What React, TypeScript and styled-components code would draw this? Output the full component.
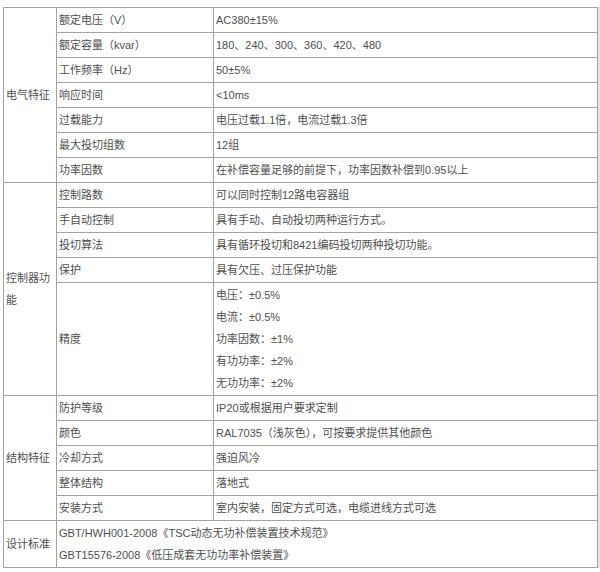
import styled, { createGlobalStyle } from "styled-components";

const GlobalStyle = createGlobalStyle`
  html, body {
    margin: 0;
    background: #ffffff;
  }
  body {
    padding: 7px 0 0 3px;
    font-family: "Liberation Sans", "Noto Sans CJK SC", sans-serif;
    font-size: 11px;
    color: #4f4f4f;
  }
`;

const SpecTable = styled.table`
  width: 594px;
  border-collapse: collapse;
  table-layout: fixed;
  border: 1px solid #9a9a9a;
  box-shadow: 2px 0 0 #e4e4e4;
`;

const Cell = styled.td`
  border: 1px solid #a3a3a3;
  padding: 1px 1px 1px 2px;
  line-height: 22px;
  vertical-align: middle;
  text-align: left;
  word-break: break-all;
  font-size: 11px;
`;

const GroupCell = styled(Cell)`
  padding-left: 2px;
`;

const Line = styled.div`
  line-height: 22px;
`;

type Row = { label: string; value: string[] };
type Group = { title: string; rows: Row[] };

const groups: Group[] = [
  {
    title: "电气特征",
    rows: [
      { label: "额定电压（V）", value: ["AC380±15%"] },
      { label: "额定容量（kvar）", value: ["180、240、300、360、420、480"] },
      { label: "工作频率（Hz）", value: ["50±5%"] },
      { label: "响应时间", value: ["<10ms"] },
      { label: "过载能力", value: ["电压过载1.1倍，电流过载1.3倍"] },
      { label: "最大投切组数", value: ["12组"] },
      { label: "功率因数", value: ["在补偿容量足够的前提下，功率因数补偿到0.95以上"] },
    ],
  },
  {
    title: "控制器功能",
    rows: [
      { label: "控制路数", value: ["可以同时控制12路电容器组"] },
      { label: "手自动控制", value: ["具有手动、自动投切两种运行方式。"] },
      { label: "投切算法", value: ["具有循环投切和8421编码投切两种投切功能。"] },
      { label: "保护", value: ["具有欠压、过压保护功能"] },
      {
        label: "精度",
        value: ["电压：±0.5%", "电流：±0.5%", "功率因数：±1%", "有功功率：±2%", "无功功率：±2%"],
      },
    ],
  },
  {
    title: "结构特征",
    rows: [
      { label: "防护等级", value: ["IP20或根据用户要求定制"] },
      { label: "颜色", value: ["RAL7035（浅灰色），可按要求提供其他颜色"] },
      { label: "冷却方式", value: ["强迫风冷"] },
      { label: "整体结构", value: ["落地式"] },
      { label: "安装方式", value: ["室内安装，固定方式可选，电缆进线方式可选"] },
    ],
  },
];

const standards = [
  "GBT/HWH001-2008《TSC动态无功补偿装置技术规范》",
  "GBT15576-2008《低压成套无功功率补偿装置》",
];

export default function App() {
  return (
    <>
      <GlobalStyle />
      <SpecTable>
        <colgroup>
          <col style={{ width: 53 }} />
          <col style={{ width: 157 }} />
          <col style={{ width: 384 }} />
        </colgroup>
        <tbody>
          {groups.map((g) =>
            g.rows.map((r, i) => (
              <tr key={g.title + r.label}>
                {i === 0 && <GroupCell rowSpan={g.rows.length}>{g.title}</GroupCell>}
                <Cell>{r.label}</Cell>
                <Cell>
                  {r.value.map((v) => (
                    <Line key={v}>{v}</Line>
                  ))}
                </Cell>
              </tr>
            ))
          )}
          <tr>
            <GroupCell>设计标准</GroupCell>
            <Cell colSpan={2}>
              {standards.map((s) => (
                <Line key={s}>{s}</Line>
              ))}
            </Cell>
          </tr>
        </tbody>
      </SpecTable>
    </>
  );
}
